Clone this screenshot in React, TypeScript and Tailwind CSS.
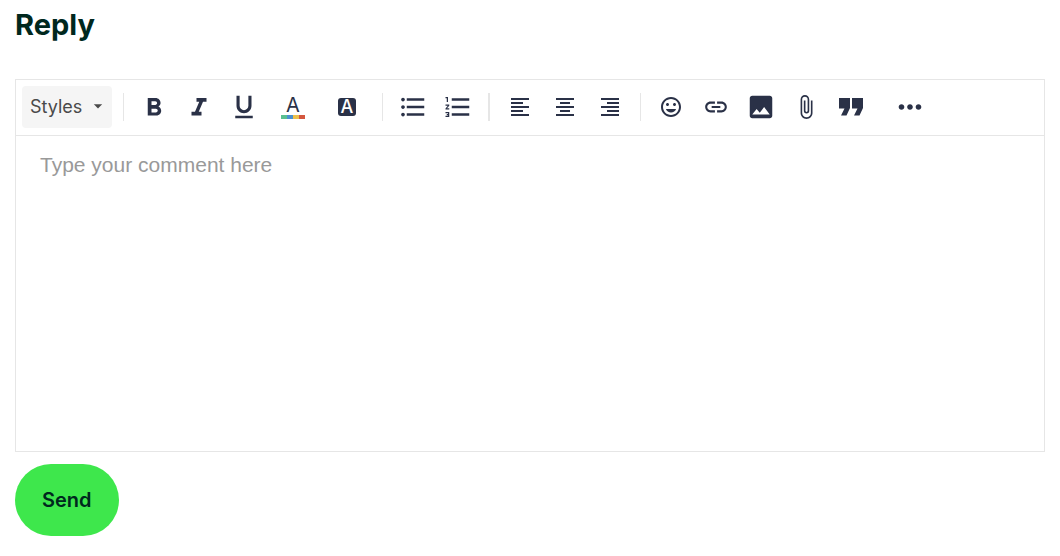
import type { ReactNode } from 'react';
import {
  MdArrowDropDown,
  MdAttachFile,
  MdFormatAlignCenter,
  MdFormatAlignLeft,
  MdFormatAlignRight,
  MdFormatBold,
  MdFormatItalic,
  MdFormatListBulleted,
  MdFormatListNumbered,
  MdFormatUnderlined,
  MdImage,
  MdInsertEmoticon,
  MdLink,
  MdMoreHoriz,
} from 'react-icons/md';

interface ToolButtonProps {
  label: string;
  wide?: boolean;
  children: ReactNode;
}

function ToolButton({ label, wide, children }: ToolButtonProps) {
  return (
    <button
      type="button"
      aria-label={label}
      className={`flex h-[42px] shrink-0 items-center justify-center rounded hover:bg-gray-100 ${
        wide ? 'mr-px w-13' : 'w-11'
      }`}
    >
      {children}
    </button>
  );
}

function ToolGroup({ children }: { children: ReactNode }) {
  return <div className="flex items-center gap-px">{children}</div>;
}

function Separator({ thick }: { thick?: boolean }) {
  return <div className={`mx-2 h-7 bg-[#e6e6e6] ${thick ? 'w-0.5' : 'w-px'}`} />;
}

function Toolbar() {
  return (
    <div
      role="toolbar"
      aria-label="Formatting"
      className="flex flex-wrap items-center border-b border-[#e6e6e6] p-1.5 pb-[7px] text-[#2a3147]"
    >
      <div className="relative mr-[3px]">
        <select
          aria-label="Styles"
          className="h-[42px] w-[90px] appearance-none rounded bg-[#f5f5f5] pb-0.5 pl-2 font-[Inter,sans-serif] text-[18px] text-[#4a4a4a]"
        >
          <option>Styles</option>
        </select>
        <MdArrowDropDown className="pointer-events-none absolute top-2.5 right-1 size-5 text-[#4a4a4a]" />
      </div>
      <Separator />
      <ToolGroup>
        <ToolButton label="Bold">
          <MdFormatBold className="mt-0.5 size-[30px]" />
        </ToolButton>
        <ToolButton label="Italic">
          <MdFormatItalic className="mt-0.5 size-[30px]" />
        </ToolButton>
        <ToolButton label="Underline">
          <MdFormatUnderlined className="size-[30px]" />
        </ToolButton>
        <ToolButton label="Text color" wide>
          <span className="mt-0.5 flex flex-col items-center gap-0.5">
            <span className="font-[Inter,sans-serif] text-[20px] leading-4">A</span>
            <span className="flex h-1">
              <span className="w-1.5 bg-[#5abf90]" />
              <span className="w-1.5 bg-[#4a90d0]" />
              <span className="w-1.5 bg-[#ecc04c]" />
              <span className="w-1.5 bg-[#d4573f]" />
            </span>
          </span>
        </ToolButton>
        <ToolButton label="Background color" wide>
          <span className="flex size-[18px] items-center justify-center rounded-[3px] bg-[#2a3147] font-[Inter,sans-serif] text-[18px] leading-none font-medium text-white">
            A
          </span>
        </ToolButton>
      </ToolGroup>
      <Separator />
      <ToolGroup>
        <ToolButton label="Bulleted list">
          <MdFormatListBulleted className="size-[30px]" />
        </ToolButton>
        <ToolButton label="Numbered list">
          <MdFormatListNumbered className="size-[30px]" />
        </ToolButton>
      </ToolGroup>
      <Separator thick />
      <ToolGroup>
        <ToolButton label="Align left">
          <MdFormatAlignLeft className="size-6" />
        </ToolButton>
        <ToolButton label="Align center">
          <MdFormatAlignCenter className="size-6" />
        </ToolButton>
        <ToolButton label="Align right">
          <MdFormatAlignRight className="size-6" />
        </ToolButton>
      </ToolGroup>
      <Separator />
      <ToolGroup>
        <ToolButton label="Emoji">
          <MdInsertEmoticon className="size-6" />
        </ToolButton>
        <ToolButton label="Link">
          <MdLink className="size-[26px]" />
        </ToolButton>
        <ToolButton label="Image">
          <MdImage className="size-[30px]" />
        </ToolButton>
        <ToolButton label="Attach file">
          <MdAttachFile className="size-[26px]" />
        </ToolButton>
        <ToolButton label="Quote">
          {/* closing quote marks with square heads and slanted tails */}
          <svg viewBox="0 0 24 18" className="h-[18px] w-6" fill="currentColor" aria-hidden="true">
            <path d="M0 0h11v10l-3.500 7.500H2L5.500 10.500H0zM13 0h11v10l-3.500 7.500H15l3.500-7H13z" />
          </svg>
        </ToolButton>
      </ToolGroup>
      <div className="ml-[11px]">
        <ToolButton label="More" wide>
          <MdMoreHoriz className="size-[34px]" />
        </ToolButton>
      </div>
    </div>
  );
}

export default function App() {
  return (
    <form className="bg-white px-[15px] pt-[5px] pb-5" onSubmit={(e) => e.preventDefault()}>
      <h2 className="mb-[34px] font-[Inter,sans-serif] text-[29px] leading-10 font-bold text-[#00281e]">
        <label htmlFor="comment">Reply</label>
      </h2>
      <div className="border border-[#e6e6e6]">
        <Toolbar />
        <textarea
          id="comment"
          placeholder="Type your comment here"
          className="block h-[315px] w-full resize-none px-6 py-4 font-['Liberation_Sans',Arial,sans-serif] text-[21px] leading-[26px] text-[#333] outline-none placeholder:text-[#999]"
        />
      </div>
      <button
        type="submit"
        className="mt-3 h-18 rounded-full bg-[#3ee74c] px-[27px] font-[Inter,sans-serif] text-[20px] font-semibold text-[#00281e]"
      >
        Send
      </button>
    </form>
  );
}
